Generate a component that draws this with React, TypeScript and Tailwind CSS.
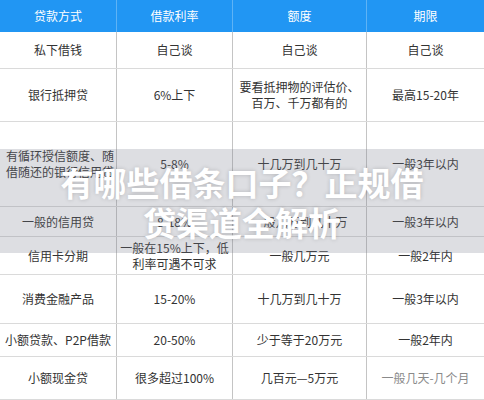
import React from 'react';

type Row = {
  h: string;
  cells: React.ReactNode[];
  firstLeft?: boolean;
};

const cols = 'grid grid-cols-[116px_116px_134px_118px]';

const headers = ['贷款方式', '借款利率', '额度', '期限'];

const rows: Row[] = [
  { h: 'h-[37px]', cells: ['私下借钱', '自己谈', '自己谈', '自己谈'] },
  {
    h: 'h-[53px]',
    cells: [
      '银行抵押贷',
      '6%上下',
      <>
        <span className="block">要看抵押物的评估价、</span>
        <span className="block">百万、千万都有的</span>
      </>,
      '最高15-20年',
    ],
  },
  {
    h: 'h-[85px]',
    firstLeft: true,
    cells: [
      <>
        <span className="block">有循环授信额度、随</span>
        <span className="block">借随还的银行信用贷</span>
      </>,
      '5-8%',
      '十几万到几十万',
      '一般3年以内',
    ],
  },
  { h: 'h-[30px]', cells: ['一般的信用贷', '8-18%', '一般几万到几十万', '一般3年以内'] },
  {
    h: 'h-[38px]',
    cells: [
      '信用卡分期',
      <>
        <span className="block">一般在15%上下，低</span>
        <span className="block">利率可遇不可求</span>
      </>,
      '一般几万元',
      '一般2年内',
    ],
  },
  { h: 'h-[49px]', cells: ['消费金融产品', '15-20%', '十几万到几十万', '一般3年以内'] },
  { h: 'h-[33px]', cells: ['小额贷款、P2P借款', '20-50%', '少于等于20万元', '一般2年内'] },
  {
    h: 'h-[43px]',
    cells: [
      '小额现金贷',
      '很多超过100%',
      '几百元—5万元',
      <span className="text-[#8a8a8a]">一般几天-几个月</span>,
    ],
  },
];

const App = () => {
  return (
    <div className="relative w-[484px] h-[400px] overflow-hidden bg-white font-['Noto_Sans_CJK_SC','Noto_Sans',sans-serif]">
      {/* header */}
      <div className={`${cols} h-[32px] bg-[#2196f3] text-white text-[12px]`}>
        {headers.map((h, i) => (
          <div
            key={h}
            className={`flex items-center justify-center ${i > 0 ? 'border-l border-[#5eb3f5]' : ''}`}
          >
            {h}
          </div>
        ))}
      </div>

      {/* body */}
      {rows.map((row, r) => (
        <div key={r} className={`${cols} ${row.h} border-b border-[#dadada] text-[12px] leading-[16px] text-[#333]`}>
          {row.cells.map((c, i) => (
            <div
              key={i}
              className={`flex items-center ${
                i === 0 && row.firstLeft ? 'justify-start text-left pl-[6px]' : 'justify-center text-center'
              } ${i > 0 ? 'border-l border-[#c4c4c4]' : ''}`}
            >
              <div>{c}</div>
            </div>
          ))}
        </div>
      ))}

      {/* title overlay */}
      <div className="absolute left-0 right-0 top-[149px] h-[104px] bg-[rgba(120,125,140,0.25)] flex flex-col items-center pt-[13px]">
        <div className="text-white font-bold text-[33px] leading-[40px] [text-shadow:0_0_4px_rgba(0,0,0,0.18)]">
          有哪些借条口子？正规借
        </div>
        <div className="text-white font-bold text-[33px] leading-[40px] [text-shadow:0_0_4px_rgba(0,0,0,0.18)]">
          贷渠道全解析
        </div>
      </div>
    </div>
  );
};

export default App;
